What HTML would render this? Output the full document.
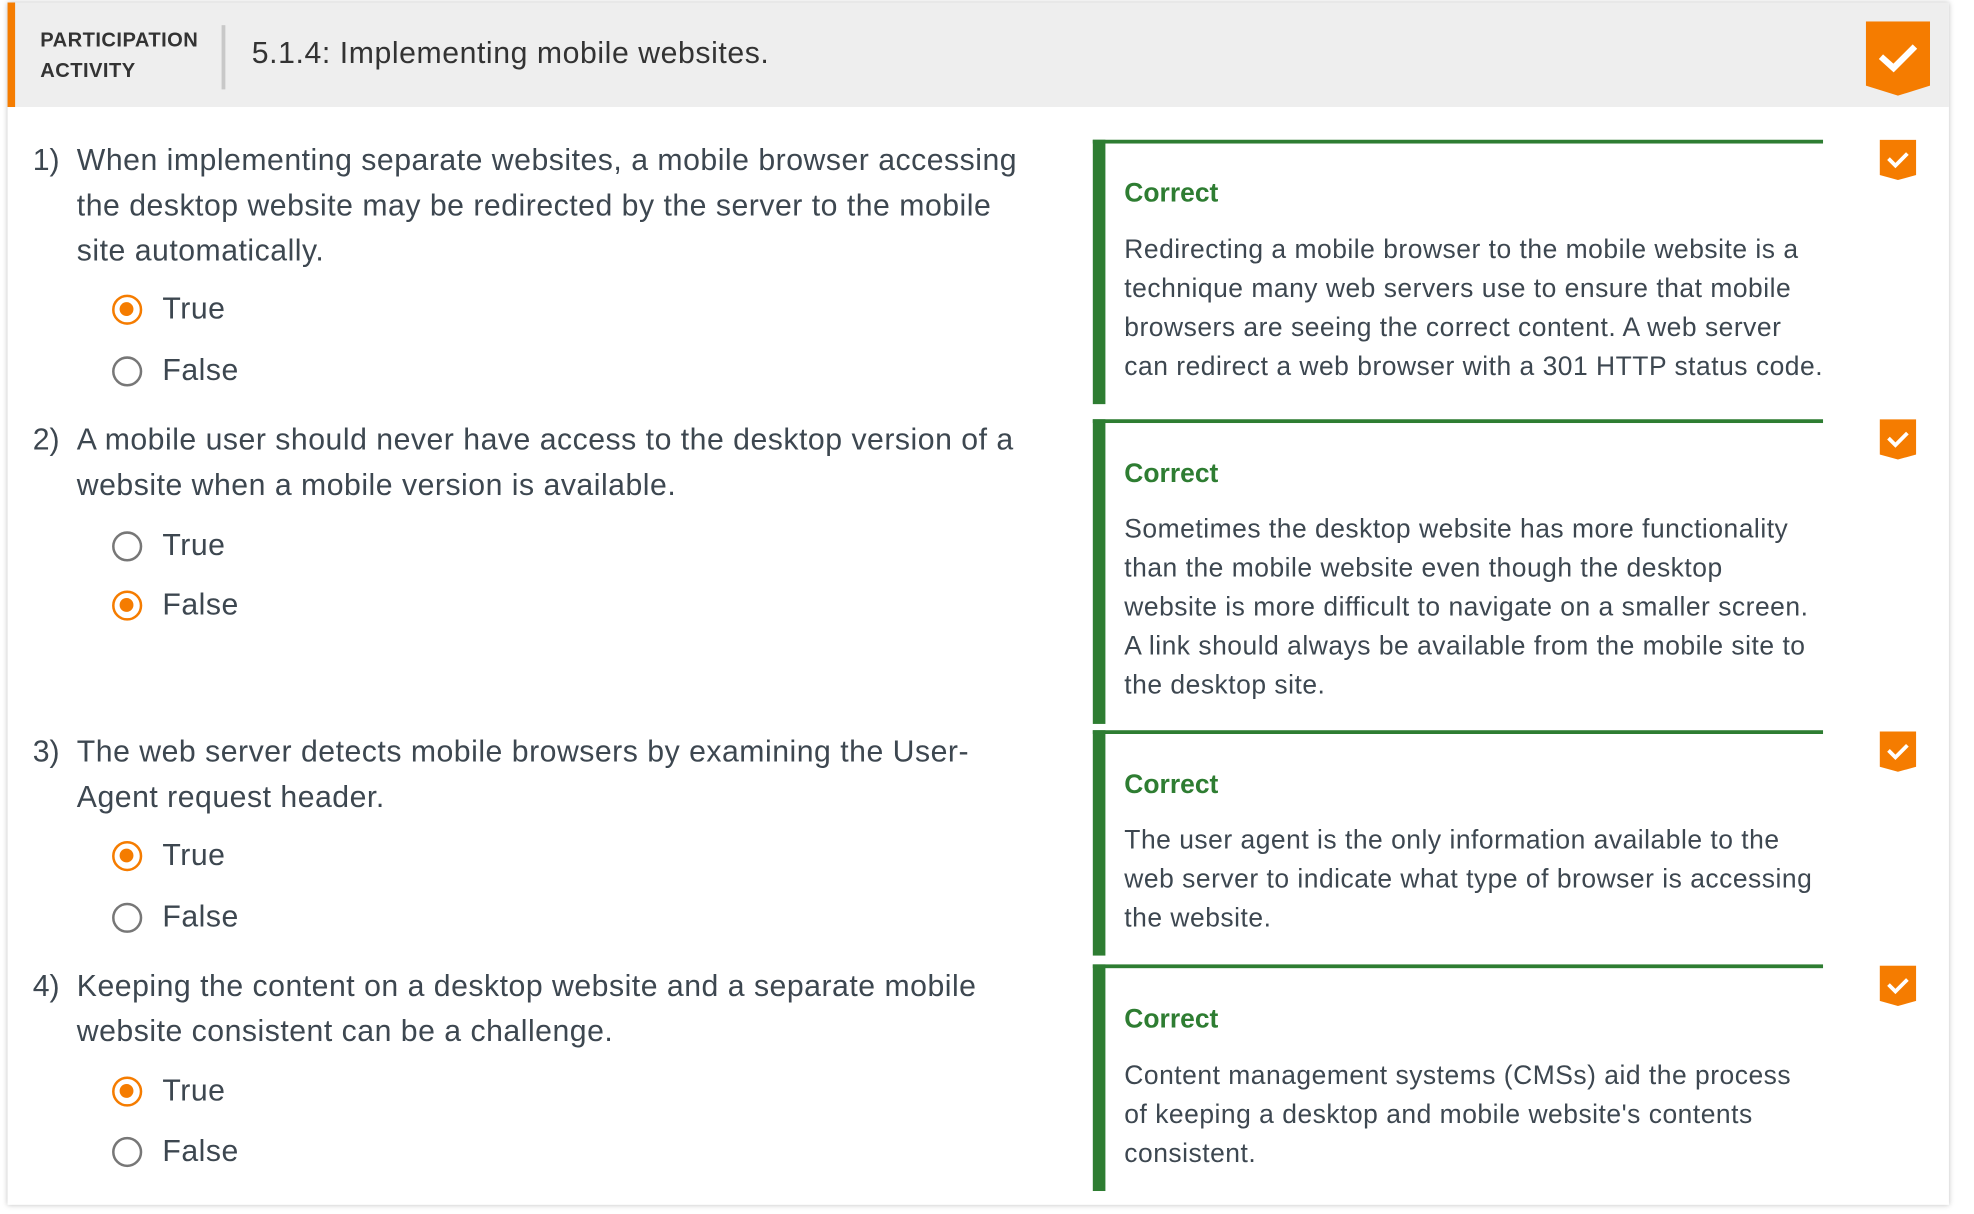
<!DOCTYPE html>
<html><head><meta charset="utf-8"><style>
html,body{margin:0;padding:0;background:#fff;width:1974px;height:1214px;overflow:hidden}
#w{position:absolute;left:0;top:0;width:1568px;height:964px;transform:scale(1.259);transform-origin:0 0;font-family:"Liberation Sans",Arial,sans-serif;color:#3d4750}
.card{position:absolute;left:6px;top:2px;width:1542px;height:955px;background:#fff;box-shadow:0 0 4px rgba(0,0,0,.25)}
.hdr{position:absolute;left:6px;top:2px;width:1542px;height:83px;background:#eee}
.obar{position:absolute;left:6px;top:2px;width:6px;height:83px;background:#f57c00}
.pa{position:absolute;left:32px;top:21px;font-size:16px;font-weight:bold;line-height:24px;color:#333;letter-spacing:.35px}
.div{position:absolute;left:176px;top:20px;width:3px;height:51px;background:#c8c8c8}
.ttl{position:absolute;left:200px;top:29px;font-size:24px;color:#333;letter-spacing:.45px;white-space:nowrap}
.t{position:absolute;white-space:nowrap}
.q{font-size:24px;line-height:36px;letter-spacing:.4px}
.n{position:absolute;left:26px;font-size:24px;line-height:36px}
.r{position:absolute;left:89px;width:24px;height:24px;border:2.5px solid #777;border-radius:50%;box-sizing:border-box}
.r.on{border-color:#f57c00}
.r.on::after{content:"";position:absolute;left:4px;top:4px;width:11px;height:11px;border-radius:50%;background:#f57c00}
.lab{position:absolute;left:129px;font-size:24px;line-height:30px;letter-spacing:.4px}
.fb{position:absolute;left:868px;width:580px;border-left:10px solid #2e7d32;border-top:3px solid #2e7d32;box-sizing:border-box}
.c{position:absolute;left:893px;font-size:21px;font-weight:bold;color:#2e7d32;line-height:30px}
.fx{position:absolute;left:893px;font-size:21px;line-height:31px;letter-spacing:.4px;white-space:nowrap}
svg{position:absolute}
</style></head><body><div id="w">
<div class="card"></div><div class="hdr"></div><div class="obar"></div>
<div class="pa">PARTICIPATION<br>ACTIVITY</div><div class="div"></div>
<div class="ttl">5.1.4: Implementing mobile websites.</div>
<svg style="left:1482px;top:17px" width="51" height="60" viewBox="0 0 51 60"><path d="M0 0H51V51L25.5 59L0 51Z" fill="#f57c00"/><path d="M12 28L22 37L39 20" stroke="#fff" stroke-width="5" fill="none"/></svg>

<div class="n" style="top:110px">1)</div>
<div class="t q" style="left:61px;top:110px">When implementing separate websites, a mobile browser accessing<br>the desktop website may be redirected by the server to the mobile<br>site automatically.</div>
<div class="r on" style="top:234px"></div><div class="lab" style="top:231px">True</div>
<div class="r" style="top:283px"></div><div class="lab" style="top:280px">False</div>
<div class="fb" style="top:111px;height:210px"></div>
<div class="c" style="top:139px">Correct</div>
<div class="fx" style="top:183px">Redirecting a mobile browser to the mobile website is a<br>technique many web servers use to ensure that mobile<br>browsers are seeing the correct content. A web server<br>can redirect a web browser with a 301 HTTP status code.</div>

<div class="n" style="top:332px">2)</div>
<div class="t q" style="left:61px;top:332px">A mobile user should never have access to the desktop version of a<br>website when a mobile version is available.</div>
<div class="r" style="top:422px"></div><div class="lab" style="top:419px">True</div>
<div class="r on" style="top:469px"></div><div class="lab" style="top:466px">False</div>
<div class="fb" style="top:333px;height:242px"></div>
<div class="c" style="top:362px">Correct</div>
<div class="fx" style="top:405px">Sometimes the desktop website has more functionality<br>than the mobile website even though the desktop<br>website is more difficult to navigate on a smaller screen.<br>A link should always be available from the mobile site to<br>the desktop site.</div>

<div class="n" style="top:580px">3)</div>
<div class="t q" style="left:61px;top:580px">The web server detects mobile browsers by examining the User-<br>Agent request header.</div>
<div class="r on" style="top:668px"></div><div class="lab" style="top:665px">True</div>
<div class="r" style="top:717px"></div><div class="lab" style="top:714px">False</div>
<div class="fb" style="top:580px;height:179px"></div>
<div class="c" style="top:609px">Correct</div>
<div class="fx" style="top:652px">The user agent is the only information available to the<br>web server to indicate what type of browser is accessing<br>the website.</div>

<div class="n" style="top:766px">4)</div>
<div class="t q" style="left:61px;top:766px">Keeping the content on a desktop website and a separate mobile<br>website consistent can be a challenge.</div>
<div class="r on" style="top:855px"></div><div class="lab" style="top:852px">True</div>
<div class="r" style="top:903px"></div><div class="lab" style="top:900px">False</div>
<div class="fb" style="top:766px;height:180px"></div>
<div class="c" style="top:795px">Correct</div>
<div class="fx" style="top:839px">Content management systems (CMSs) aid the process<br>of keeping a desktop and mobile website's contents<br>consistent.</div>

<svg style="left:1493px;top:111px" width="29" height="33" viewBox="0 0 29 33"><path d="M0 0H29V28L14.5 32L0 28Z" fill="#f57c00"/><path d="M7 15L12.5 20.5L22 11" stroke="#fff" stroke-width="3" fill="none"/></svg>
<svg style="left:1493px;top:333px" width="29" height="33" viewBox="0 0 29 33"><path d="M0 0H29V28L14.5 32L0 28Z" fill="#f57c00"/><path d="M7 15L12.5 20.5L22 11" stroke="#fff" stroke-width="3" fill="none"/></svg>
<svg style="left:1493px;top:581px" width="29" height="33" viewBox="0 0 29 33"><path d="M0 0H29V28L14.5 32L0 28Z" fill="#f57c00"/><path d="M7 15L12.5 20.5L22 11" stroke="#fff" stroke-width="3" fill="none"/></svg>
<svg style="left:1493px;top:767px" width="29" height="33" viewBox="0 0 29 33"><path d="M0 0H29V28L14.5 32L0 28Z" fill="#f57c00"/><path d="M7 15L12.5 20.5L22 11" stroke="#fff" stroke-width="3" fill="none"/></svg>
</div></body></html>
